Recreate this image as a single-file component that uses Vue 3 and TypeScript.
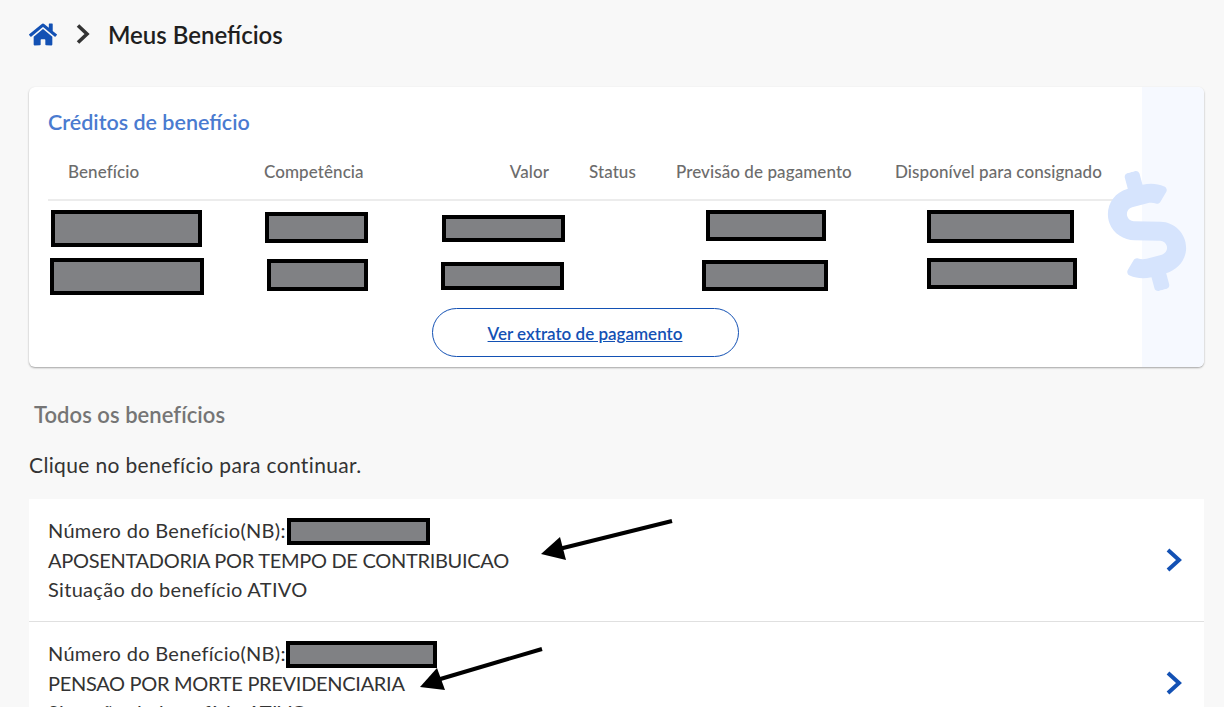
<script setup lang="ts">
interface Box {
  w: number
  h: number
  x: number
  y: number
}

const columns = [
  { label: 'Benefício', cls: '' },
  { label: 'Competência', cls: '' },
  { label: 'Valor', cls: 'right' },
  { label: 'Status', cls: '' },
  { label: 'Previsão de pagamento', cls: '' },
  { label: 'Disponível para consignado', cls: '' }
]

// the value cells are blacked out in the source, status stays empty
const rows: (Box | null)[][] = [
  [
    { w: 151, h: 37, x: 3, y: 2 },
    { w: 103, h: 31, x: 21, y: 4 },
    { w: 123, h: 27, x: 57, y: 7 },
    null,
    { w: 120, h: 31, x: 50, y: 2 },
    { w: 147, h: 33, x: 52, y: 2 }
  ],
  [
    { w: 154, h: 37, x: 2, y: 2 },
    { w: 101, h: 32, x: 23, y: 3 },
    { w: 123, h: 28, x: 56, y: 6 },
    null,
    { w: 126, h: 31, x: 46, y: 4 },
    { w: 150, h: 31, x: 52, y: 2 }
  ]
]

const benefits = [
  { kind: 'APOSENTADORIA POR TEMPO DE CONTRIBUICAO', nbW: 143, nbH: 27, shift: 0 },
  { kind: 'PENSAO POR MORTE PREVIDENCIARIA', nbW: 151, nbH: 27, shift: -1 }
]
</script>

<template>
  <div class="page">
    <nav class="crumbs">
      <svg class="home" viewBox="0 0 576 512" aria-hidden="true">
        <path d="M280.37 148.26L96 300.11V464a16 16 0 0 0 16 16l112.06-.29a16 16 0 0 0 15.92-16V368a16 16 0 0 1 16-16h64a16 16 0 0 1 16 16v95.64a16 16 0 0 0 16 16.05L464 480a16 16 0 0 0 16-16V300L295.67 148.26a12.19 12.19 0 0 0-15.3 0zM571.6 251.47L488 182.56V44.05a12 12 0 0 0-12-12h-56a12 12 0 0 0-12 12v72.61L318.47 43a48 48 0 0 0-61 0L4.34 251.47a12 12 0 0 0-1.6 16.9l25.5 31A12 12 0 0 0 45.15 301l235.22-193.74a12.19 12.19 0 0 1 15.3 0L530.9 301a12 12 0 0 0 16.9-1.6l25.5-31a12 12 0 0 0-1.7-16.93z" />
      </svg>
      <svg class="sep" viewBox="0 0 14 20" aria-hidden="true">
        <polyline points="2,1.5 11,10 2,18.5" />
      </svg>
      <span class="current">Meus Benefícios</span>
    </nav>

    <section class="card">
      <div class="card-main">
        <h2 class="card-title">Créditos de benefício</h2>
        <div class="table-head">
          <div v-for="col in columns" :key="col.label" class="th" :class="col.cls">{{ col.label }}</div>
        </div>
        <div v-for="(row, i) in rows" :key="i" class="table-row">
          <div v-for="(box, j) in row" :key="j" class="td">
            <span
              v-if="box"
              class="redact"
              :style="{ width: box.w + 'px', height: box.h + 'px', marginLeft: box.x + 'px', marginTop: box.y + 'px' }"
            ></span>
          </div>
        </div>
        <div class="actions">
          <a class="btn" href="#">Ver extrato de pagamento</a>
        </div>
      </div>
      <aside class="card-side"></aside>
      <svg class="dollar" viewBox="0 0 288 512" aria-hidden="true">
        <path d="M209.2 233.4l-108-31.6C88.7 198.2 80 186.5 80 173.5c0-16.3 13.2-29.5 29.5-29.5h66.3c12.2 0 24.2 3.7 34.2 10.5 6.1 4.1 14.3 3.1 19.5-2l34.8-34c7.1-6.9 6.1-18.4-1.8-24.5C238 74.8 207.4 64.1 176 64V16c0-8.8-7.2-16-16-16h-32c-8.8 0-16 7.2-16 16v48h-2.5C45.8 64-5.4 118.7.5 183.6c4.2 46.1 39.4 83.6 83.8 96.6l102.5 30c12.5 3.7 21.2 15.3 21.2 28.3 0 16.3-13.2 29.5-29.5 29.5h-66.3C100 368 88 364.3 78 357.5c-6.1-4.1-14.3-3.1-19.5 2l-34.8 34c-7.1 6.9-6.1 18.4 1.8 24.5 24.5 19.2 55.1 29.9 86.5 30v48c0 8.8 7.2 16 16 16h32c8.8 0 16-7.2 16-16v-48.2c46.6-.9 90.3-28.6 105.7-72.7 21.5-61.6-14.6-124.8-72.5-141.7z" />
      </svg>
    </section>

    <h3 class="section-title">Todos os benefícios</h3>
    <p class="hint">Clique no benefício para continuar.</p>

    <div class="list">
      <div v-for="item in benefits" :key="item.kind" class="list-item">
        <div class="info">
          <div class="nb">
            <span class="nb-label">Número do Benefício(NB):</span>
            <span
              class="redact nb-box"
              :style="{ width: item.nbW + 'px', height: item.nbH + 'px', marginLeft: item.shift + 'px' }"
            ></span>
          </div>
          <div class="kind">{{ item.kind }}</div>
          <div>Situação do benefício ATIVO</div>
        </div>
        <svg class="chevron" viewBox="0 0 18 26" aria-hidden="true">
          <polyline points="3,3 14,13 3,23" />
        </svg>
      </div>
      <!-- hand drawn arrows on top of the list -->
      <svg class="arrows" viewBox="0 0 1175 208" aria-hidden="true">
        <line x1="643" y1="22" x2="530" y2="50" />
        <polygon points="512,55 531,38 537,61" />
        <line x1="513" y1="150" x2="408" y2="181" />
        <polygon points="391,188 408,169 416,191" />
      </svg>
    </div>
  </div>
</template>

<style>
html,
body {
  margin: 0;
  overflow: hidden;
  background: #f8f8f8;
}
</style>

<style scoped>
.page {
  height: 707px;
  overflow: hidden;
  box-sizing: border-box;
  padding: 0 20px 0 29px;
  background: #f8f8f8;
  font-family: Lato, "Noto Sans", sans-serif;
  color: #333;
}

.crumbs {
  display: flex;
  align-items: center;
  height: 87px;
  padding-bottom: 19px;
  box-sizing: border-box;
}

.home {
  width: 28px;
  height: 25px;
  fill: #1351b4;
}

.sep {
  width: 14px;
  height: 20px;
  margin-left: 19px;
  fill: none;
  stroke: #333;
  stroke-width: 3.6;
}

.current {
  margin-left: 18px;
  font-size: 24px;
  font-weight: 600;
  color: #1f1f1f;
}

.card {
  position: relative;
  display: flex;
  height: 280px;
  background: #fff;
  border-radius: 6px;
  box-shadow: 0 1px 2px rgba(0, 0, 0, 0.35);
  overflow: hidden;
}

.card-main {
  flex: 1;
  min-width: 0;
  padding: 23px 0 0 19px;
}

.card-side {
  flex: none;
  width: 62px;
  background: #f6f9ff;
}

.dollar {
  position: absolute;
  left: 1077px;
  top: 83px;
  width: 82px;
  height: 122px;
  fill: #d6e4fd;
  transform: rotate(-15deg);
}

.card-title {
  margin: 0;
  height: 24px;
  line-height: 24px;
  font-size: 21.5px;
  font-weight: 600;
  color: #4a7bd0;
}

.table-head,
.table-row {
  display: grid;
  grid-template-columns: 196px 141px 184px 87px 219px 247px;
}

.table-head {
  margin: 16px 0 7px;
  height: 51px;
  align-items: center;
  box-sizing: border-box;
  border-bottom: 2px solid #ececec;
  padding-bottom: 7px;
}

.th {
  padding: 0 20px;
  font-size: 17px;
  letter-spacing: 0.08px;
  font-weight: 500;
  color: #6c6c6c;
  white-space: nowrap;
}

.th.right {
  text-align: right;
}

.table-row {
  height: 48px;
}

.td {
  display: flex;
  align-items: flex-start;
}

.redact {
  display: block;
  box-sizing: border-box;
  background: #808184;
  border: 4px solid #000;
}

.actions {
  display: flex;
  justify-content: center;
  margin-top: 4px;
  width: 1074px;
}

.btn {
  display: flex;
  align-items: center;
  justify-content: center;
  box-sizing: border-box;
  width: 307px;
  height: 49px;
  padding-top: 1px;
  border: 1px solid #1351b4;
  border-radius: 25px;
  font-size: 17px;
  font-weight: 600;
  color: #1351b4;
}

.section-title {
  margin: 36px 0 0 5px;
  height: 24px;
  line-height: 24px;
  font-size: 22px;
  letter-spacing: 0.05px;
  font-weight: 600;
  color: #757575;
}

.hint {
  margin: 26px 0 0;
  height: 24px;
  line-height: 24px;
  font-size: 21px;
  letter-spacing: 0.35px;
  color: #333;
}

.list {
  position: relative;
  margin-top: 22px;
}

.list-item {
  display: flex;
  align-items: center;
  justify-content: space-between;
  box-sizing: border-box;
  height: 123px;
  padding: 0 20px 0 19px;
  background: #fff;
  border-bottom: 1px solid #e0e0e0;
  font-size: 20px;
  letter-spacing: 0.3px;
  line-height: 29.5px;
  color: #333;
}

.info {
  padding-top: 1px;
}

.kind {
  letter-spacing: -0.3px;
}

.nb {
  display: flex;
  align-items: center;
  height: 29.5px;
}

.nb-label {
  display: inline-block;
  width: 239px;
  white-space: nowrap;
}

.chevron {
  width: 18px;
  height: 26px;
  margin-right: 1px;
  fill: none;
  stroke: #1351b4;
  stroke-width: 4;
}

.arrows {
  position: absolute;
  left: 0;
  top: 0;
  width: 1175px;
  height: 208px;
  pointer-events: none;
}

.arrows line {
  stroke: #000;
  stroke-width: 4;
}

.arrows polygon {
  fill: #000;
}
</style>
